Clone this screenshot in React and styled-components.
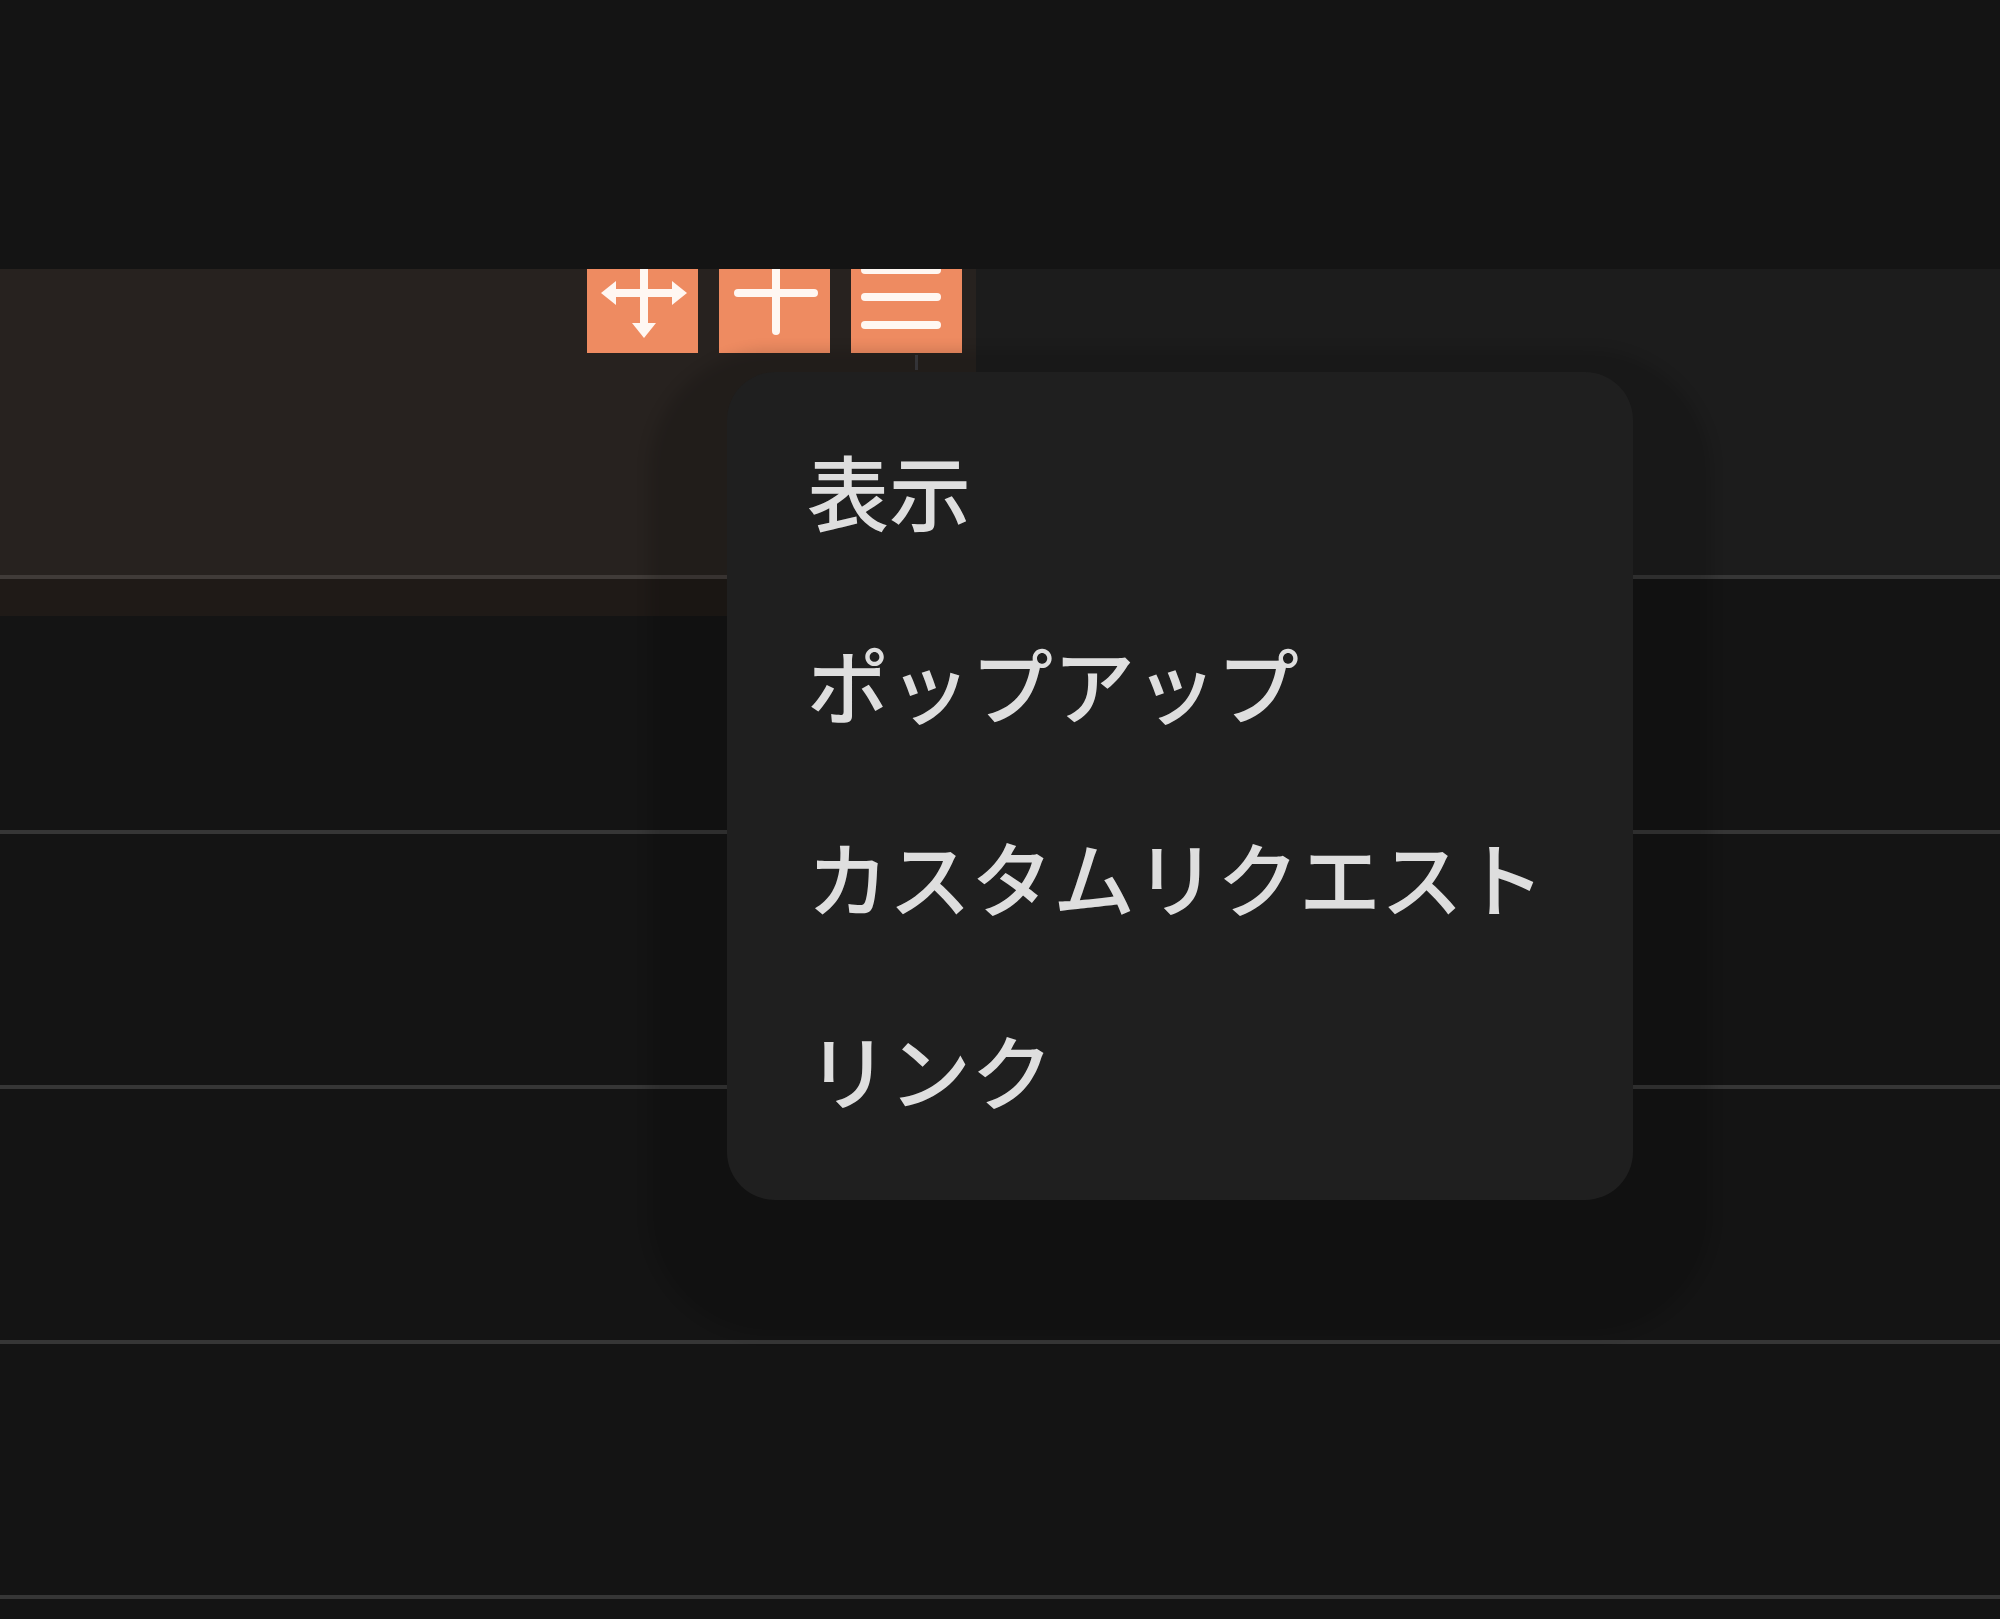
import React from "react";
import styled, { createGlobalStyle } from "styled-components";

const GlobalStyle = createGlobalStyle`
  html, body {
    margin: 0;
    padding: 0;
    background: #141414;
  }
  body {
    font-family: "Noto Sans CJK JP", "Noto Sans", sans-serif;
  }
`;

const MoveIcon = () => (
  <svg width="100" height="100" viewBox="0 0 100 100">
    <g stroke="#fff7f2" strokeWidth="8" strokeLinecap="round">
      <line x1="16" y1="50" x2="86" y2="50" />
      <line x1="51" y1="14" x2="51" y2="86" />
    </g>
    <g fill="#fff7f2">
      <polygon points="8,50 23,38 23,62" />
      <polygon points="94,50 79,38 79,62" />
      <polygon points="51,95 39,80 63,80" />
      <polygon points="51,5 39,20 63,20" />
    </g>
  </svg>
);

const PlusIcon = () => (
  <svg width="100" height="100" viewBox="0 0 100 100">
    <g stroke="#fff7f2" strokeWidth="8" strokeLinecap="round">
      <line x1="13" y1="50" x2="89" y2="50" />
      <line x1="51" y1="12" x2="51" y2="88" />
    </g>
  </svg>
);

const MenuIcon = () => (
  <svg width="100" height="100" viewBox="0 0 100 100">
    <g stroke="#fff7f2" strokeWidth="8" strokeLinecap="round">
      <line x1="8" y1="27" x2="80" y2="27" />
      <line x1="8" y1="54" x2="80" y2="54" />
      <line x1="8" y1="82" x2="80" y2="82" />
    </g>
  </svg>
);

const items = ["表示", "ポップアップ", "カスタムリクエスト", "リンク"];

const App = () => {
  return (
    <Page>
      <GlobalStyle />
      <Header />
      <Table>
        <Row $active $tall />
        <Row />
        <Row />
        <Row />
        <Row />

        <Selection>
          <Toolbar>
            <ToolButton aria-label="move">
              <MoveIcon />
            </ToolButton>
            <ToolButton aria-label="add">
              <PlusIcon />
            </ToolButton>
            <ToolButton aria-label="menu">
              <MenuIcon />
            </ToolButton>
          </Toolbar>
          <Connector />
        </Selection>

        <Menu>
          {items.map((label) => (
            <MenuItem key={label}>{label}</MenuItem>
          ))}
        </Menu>
      </Table>
    </Page>
  );
};

const Page = styled.div`
  width: 2000px;
  height: 1619px;
  overflow: hidden;
  display: flex;
  flex-direction: column;
  background: #141414;
`;

const Header = styled.header`
  position: relative;
  z-index: 5;
  flex: 0 0 269px;
  background: #141414;
`;

const Table = styled.div`
  position: relative;
  display: flex;
  flex-direction: column;
  flex: 1;
`;

const Row = styled.div`
  flex: 0 0 auto;
  height: ${(p) => (p.$tall ? "306px" : "251px")};
  background: ${(p) => (p.$active ? "#1c1c1c" : "#141414")};
  border-bottom: 4px solid #363636;
`;

const Selection = styled.div`
  position: absolute;
  left: 0;
  top: 0;
  width: 976px;
  height: 347px;
  background: rgba(236, 140, 100, 0.055);
  z-index: 1;
`;

const Toolbar = styled.div`
  position: absolute;
  top: -32px;
  right: 14px;
  display: flex;
  gap: 21px;
`;

const ToolButton = styled.button`
  width: 111px;
  height: 116px;
  padding: 6px 0 0;
  border: 0;
  border-radius: 0;
  background: #ee8b61;
  display: flex;
  align-items: flex-start;
  justify-content: center;
  cursor: pointer;
`;

const Connector = styled.span`
  position: absolute;
  left: 915px;
  top: 86px;
  width: 3px;
  height: 15px;
  background: #3c3c40;
`;

const Menu = styled.div`
  position: absolute;
  left: 727px;
  top: 103px;
  z-index: 2;
  width: 906px;
  box-sizing: border-box;
  padding: 21px 0 35px 80px;
  display: flex;
  flex-direction: column;
  background: #1f1f1f;
  border-radius: 48px;
  box-shadow: 0 56px 14px 78px rgba(0, 0, 0, 0.14);
`;

const MenuItem = styled.div`
  height: 193px;
  line-height: 193px;
  font-family: "Noto Sans CJK JP", "Noto Sans", sans-serif;
  font-size: 82px;
  font-weight: 500;
  color: #dedede;
  white-space: nowrap;
  cursor: pointer;
`;

export default App;
